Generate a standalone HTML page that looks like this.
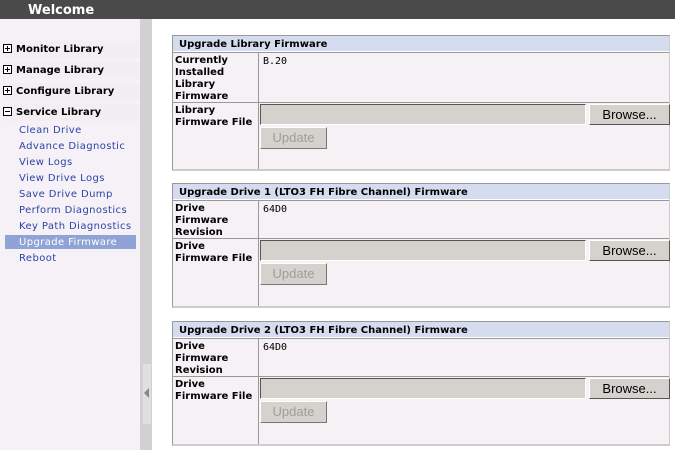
<!DOCTYPE html>
<html><head><style>
*{margin:0;padding:0;box-sizing:border-box}
body{width:675px;height:450px;overflow:hidden;background:#fff;font-family:Verdana,"DejaVu Sans",sans-serif;font-size:10px;position:relative}
.top{position:absolute;left:0;top:0;width:675px;height:19px;background:#4a4a4a;color:#fff;font-weight:bold;font-size:13px;padding-left:28px;line-height:22px}
.side{position:absolute;left:0;top:19px;width:140px;height:431px;background:#f6f1f6}
.strip{position:absolute;left:140px;top:19px;width:12px;height:431px;background:#d3d0d3}
.tab{position:absolute;left:143px;top:364px;width:8px;height:60px;background:#e2dfe2}
.grp{position:absolute;left:3px;font-weight:bold;font-size:10px;color:#000;height:17px;width:137px;background:#f2eef2;line-height:17px}
.grp b{display:inline-block;width:9px;height:9px;border:1px solid #000;vertical-align:-1px;margin-right:4px;position:relative;background:#fff}
.grp b:before{content:"";position:absolute;left:1px;top:3px;width:5px;height:1px;background:#000}
.grp b.p:after{content:"";position:absolute;left:3px;top:1px;width:1px;height:5px;background:#000}
.lk{position:absolute;left:19px;color:#2a44a8;font-size:10px;letter-spacing:0.4px}
.sel{position:absolute;left:5px;top:235px;width:131px;height:14px;background:#8fa3d6}
.pan{position:absolute;left:172px;width:498px;border:1px solid #999;border-right-color:#ccc;border-bottom:2px solid #ccc;background:#f5f1f5}
.hd{height:16px;background:#d6dcef;font-weight:bold;line-height:18px;padding-left:6px;border-bottom:1px solid #fff}
.row{position:relative;border-top:1px solid #999}
.lb{position:absolute;left:0;top:0;width:86px;height:100%;border-right:1px solid #999;font-weight:bold;padding-left:2px;line-height:12px;padding-top:2px}
.val{position:absolute;left:90px;top:3px;font-family:"DejaVu Sans Mono",monospace;font-size:10px}
.inp{position:absolute;left:87px;top:1px;width:326px;height:21px;background:#d5d2cd;border:1px solid #555;border-right-color:#fff;border-bottom-color:#fff}
.br{position:absolute;left:416px;top:1px;width:81px;height:21px;background:#d5d2cd;border:1px solid #fff;border-right-color:#555;border-bottom-color:#555;font-family:"Liberation Sans",sans-serif;font-size:13px;text-align:center;line-height:19px}
.up{position:absolute;left:87px;top:24px;width:67px;height:22px;background:#d5d2cd;border:1px solid #fff;border-right-color:#777;border-bottom-color:#777;color:#a09d98;font-family:"Liberation Sans",sans-serif;font-size:13px;text-align:center;line-height:20px}
</style></head><body>
<div class="top">Welcome</div>
<div class="side"></div>
<div class="strip"></div>
<div class="tab"></div>
<svg style="position:absolute;left:144px;top:388px" width="6" height="10"><path d="M5 0L0 5L5 10Z" fill="#888"/></svg>
<div class="grp" style="top:41px"><b class="p"></b>Monitor Library</div>
<div class="grp" style="top:62px"><b class="p"></b>Manage Library</div>
<div class="grp" style="top:83px"><b class="p"></b>Configure Library</div>
<div class="grp" style="top:104px"><b></b>Service Library</div>
<div class="sel"></div>
<div class="lk" style="top:125px">Clean Drive</div>
<div class="lk" style="top:141px">Advance Diagnostic</div>
<div class="lk" style="top:157px">View Logs</div>
<div class="lk" style="top:173px">View Drive Logs</div>
<div class="lk" style="top:189px">Save Drive Dump</div>
<div class="lk" style="top:205px">Perform Diagnostics</div>
<div class="lk" style="top:221px">Key Path Diagnostics</div>
<div class="lk" style="top:237px;color:#fff">Upgrade Firmware</div>
<div class="lk" style="top:253px">Reboot</div>

<div class="pan" style="top:35px;height:136px">
<div class="hd">Upgrade Library Firmware</div>
<div class="row" style="height:50px"><div class="lb">Currently Installed Library Firmware</div><div class="val">B.20</div></div>
<div class="row" style="height:67px"><div class="lb">Library Firmware File</div><div class="inp"></div><div class="br">Browse...</div><div class="up">Update</div></div>
</div>

<div class="pan" style="top:183px;height:125px">
<div class="hd">Upgrade Drive 1 (LTO3 FH Fibre Channel) Firmware</div>
<div class="row" style="height:38px"><div class="lb">Drive Firmware Revision</div><div class="val">64D0</div></div>
<div class="row" style="height:68px"><div class="lb">Drive Firmware File</div><div class="inp"></div><div class="br">Browse...</div><div class="up">Update</div></div>
</div>

<div class="pan" style="top:321px;height:125px">
<div class="hd">Upgrade Drive 2 (LTO3 FH Fibre Channel) Firmware</div>
<div class="row" style="height:38px"><div class="lb">Drive Firmware Revision</div><div class="val">64D0</div></div>
<div class="row" style="height:68px"><div class="lb">Drive Firmware File</div><div class="inp"></div><div class="br">Browse...</div><div class="up">Update</div></div>
</div>
</body></html>
